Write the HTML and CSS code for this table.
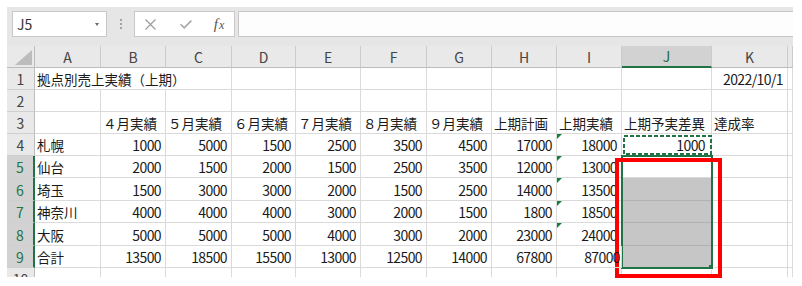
FILE: index.html
```html
<!DOCTYPE html>
<html lang="ja">
<head>
<meta charset="utf-8">
<title>Excel</title>
<link rel="stylesheet" href="styles.css">
</head>
<body>
<div class="frame">
  <div class="app">
    <div class="toolbar">
      <div class="namebox"><span>J5</span><span class="caret"></span></div>
      <div class="grip"><span></span><span></span><span></span></div>
      <div class="fbtns">
        <span class="fb fb1"><svg width="11" height="11" viewBox="0 0 11 11"><path d="M0.5 0.5 L10.5 10.5 M10.5 0.5 L0.5 10.5" stroke="#9a9a9a" stroke-width="1.1" fill="none"/></svg></span>
        <span class="fb fb2"><svg width="12" height="9" viewBox="0 0 12 9"><path d="M0.6 4.2 L4.2 7.8 L11.4 0.6" stroke="#a8a8a8" stroke-width="1.6" fill="none"/></svg></span>
        <span class="fb fb3"><i>f</i><i class="fx">x</i></span>
      </div>
      <div class="finput"></div>
    </div>
    <div class="sheetwrap">
      <div class="cells tmpl">
        <div class="c corner"><svg width="27" height="21" viewBox="0 0 27 21"><polygon points="25,4 25,19 8,19" fill="#bcbcbc"/></svg></div>
        <div class="c h">A</div><div class="c h">B</div><div class="c h">C</div><div class="c h">D</div><div class="c h">E</div><div class="c h">F</div><div class="c h">G</div><div class="c h">H</div><div class="c h">I</div><div class="c h sel">J</div><div class="c h">K</div><div class="c h"></div>

        <div class="c r">1</div><div class="c span3">拠点別売上実績（上期）</div><div class="c"></div><div class="c"></div><div class="c"></div><div class="c"></div><div class="c"></div><div class="c"></div><div class="c"></div><div class="c n">2022/10/1</div><div class="c"></div>

        <div class="c r">2</div><div class="c"></div><div class="c"></div><div class="c"></div><div class="c"></div><div class="c"></div><div class="c"></div><div class="c"></div><div class="c"></div><div class="c"></div><div class="c"></div><div class="c"></div><div class="c"></div>

        <div class="c r">3</div><div class="c"></div><div class="c">４月実績</div><div class="c">５月実績</div><div class="c">６月実績</div><div class="c">７月実績</div><div class="c">８月実績</div><div class="c">９月実績</div><div class="c">上期計画</div><div class="c">上期実績</div><div class="c">上期予実差異</div><div class="c">達成率</div><div class="c"></div>

        <div class="c r">4</div><div class="c">札幌</div><div class="c n">1000</div><div class="c n">5000</div><div class="c n">1500</div><div class="c n">2500</div><div class="c n">3500</div><div class="c n">4500</div><div class="c n">17000</div><div class="c n err">18000</div><div class="c n nj">1000</div><div class="c"></div><div class="c"></div>

        <div class="c r sel">5</div><div class="c">仙台</div><div class="c n">2000</div><div class="c n">1500</div><div class="c n">2000</div><div class="c n">1500</div><div class="c n">2500</div><div class="c n">3500</div><div class="c n">12000</div><div class="c n err">13000</div><div class="c"></div><div class="c"></div><div class="c"></div>

        <div class="c r sel">6</div><div class="c">埼玉</div><div class="c n">1500</div><div class="c n">3000</div><div class="c n">3000</div><div class="c n">2000</div><div class="c n">1500</div><div class="c n">2500</div><div class="c n">14000</div><div class="c n err">13500</div><div class="c g"></div><div class="c"></div><div class="c"></div>

        <div class="c r sel">7</div><div class="c">神奈川</div><div class="c n">4000</div><div class="c n">4000</div><div class="c n">4000</div><div class="c n">3000</div><div class="c n">2000</div><div class="c n">1500</div><div class="c n">1800</div><div class="c n err">18500</div><div class="c g"></div><div class="c"></div><div class="c"></div>

        <div class="c r sel">8</div><div class="c">大阪</div><div class="c n">5000</div><div class="c n">5000</div><div class="c n">5000</div><div class="c n">4000</div><div class="c n">3000</div><div class="c n">2000</div><div class="c n">23000</div><div class="c n err">24000</div><div class="c g"></div><div class="c"></div><div class="c"></div>

        <div class="c r sel">9</div><div class="c">合計</div><div class="c n">13500</div><div class="c n">18500</div><div class="c n">15500</div><div class="c n">13000</div><div class="c n">12500</div><div class="c n">14000</div><div class="c n">67800</div><div class="c n over">87000</div><div class="c g"></div><div class="c"></div><div class="c"></div>

        <div class="c r">10</div><div class="c"></div><div class="c"></div><div class="c"></div><div class="c"></div><div class="c"></div><div class="c"></div><div class="c"></div><div class="c"></div><div class="c"></div><div class="c"></div><div class="c"></div><div class="c"></div>
      </div>
      <div class="overlay tmpl">
        <div class="ants"><svg width="90" height="22" viewBox="0 0 90 22"><rect x="2" y="2" width="87" height="18" fill="none" stroke="#217346" stroke-width="2" stroke-dasharray="4 2"/></svg></div>
        <div class="selbox"></div>
      </div>
    </div>
  </div>
  <div class="redbox"></div>
</div>
</body>
</html>
```
FILE: styles.css
```css
html, body {
  margin: 0;
  background: #ffffff;
}
.frame {
  position: relative;
  width: 802px;
  height: 286px;
  box-sizing: border-box;
  padding: 7px 0 0 7px;
}
.app {
  width: 786px;
  height: 270px;
  overflow: hidden;
  background: #ffffff;
  font-family: "Noto Sans CJK JP", "Noto Sans", sans-serif;
}
.toolbar {
  height: 39px;
  box-sizing: border-box;
  background: #e6e6e6;
  display: flex;
  align-items: flex-start;
  padding: 4px 0 0 5px;
}
.namebox {
  width: 95px;
  height: 26px;
  box-sizing: border-box;
  background: #ffffff;
  border: 1px solid #c8c8c8;
  display: flex;
  align-items: center;
  justify-content: space-between;
  padding: 0 7px 0 4px;
  font-size: 14px;
  color: #333333;
}
.caret {
  width: 0;
  height: 0;
  border-left: 2.5px solid transparent;
  border-right: 2.5px solid transparent;
  border-top: 3px solid #6a6a6a;
}
.grip {
  width: 27px;
  display: flex;
  flex-direction: column;
  align-items: center;
  gap: 2px;
  padding-top: 8px;
}
.grip span {
  width: 2px;
  height: 2px;
  background: #a3a3a3;
}
.fbtns {
  width: 101px;
  height: 26px;
  box-sizing: border-box;
  background: #ffffff;
  border: 1px solid #c8c8c8;
  display: flex;
  align-items: center;
}
.fb {
  display: flex;
  justify-content: center;
  align-items: center;
}
.fb1 { width: 31px; }
.fb2 { width: 40px; }
.fb3 {
  width: 26px;
  font-family: "Liberation Serif", serif;
  font-size: 15px;
  color: #555555;
}
.fb3 .fx {
  font-size: 12px;
  margin-left: 1px;
  margin-top: 3px;
}
.finput {
  margin-left: 3px;
  flex: 1;
  height: 26px;
  box-sizing: border-box;
  background: #fdfdfd;
  border: 1px solid #c8c8c8;
  border-right: none;
}
.sheetwrap {
  display: grid;
}
.sheetwrap > .tmpl {
  grid-area: 1 / 1;
}
.tmpl {
  display: grid;
  grid-template-columns: 28px 66px 65px 66px 64px 65px 66px 65px 65px 65px 90px 76px 5px;
  grid-template-rows: 22px 22px 22px 22px 22px 22px 23px 22px 23px 22px 22px;
}
.cells {
  font-size: 13.5px;
  color: #1a1a1a;
}
.c {
  box-sizing: border-box;
  border-right: 1px solid #dadada;
  border-bottom: 1px solid #dadada;
  display: flex;
  align-items: center;
  padding: 1px 2px 0 2px;
  white-space: nowrap;
  min-width: 0;
}
.span3 {
  grid-column: span 3;
}
.n {
  justify-content: flex-end;
  padding-right: 4px;
  font-size: 14px;
  letter-spacing: -0.6px;
}
.nj {
  padding-right: 6px;
}
.h {
  background: #e9e9e9;
  border-right: 1px solid #cbcbcb;
  border-bottom: 1px solid #bdbdbd;
  justify-content: center;
  color: #444444;
  padding: 0;
  font-size: 14px;
}
.h.sel {
  background: #d2d2d2;
  color: #1e6b41;
  border-bottom: 2px solid #217346;
}
.corner {
  background: #e9e9e9;
  border-right: 1px solid #bdbdbd;
  border-bottom: 1px solid #bdbdbd;
  padding: 0;
  align-items: flex-start;
}
.r {
  background: #e9e9e9;
  border-right: 1px solid #bdbdbd;
  border-bottom: 1px solid #cfcfcf;
  justify-content: center;
  color: #444444;
  padding: 1px 0 0 0;
  font-size: 14px;
}
.r.sel {
  background: #d2d2d2;
  color: #217346;
  border-right: 2px solid #217346;
}
.g {
  background: #c6c6c6;
  border-bottom-color: #b2b2b2;
}
.err {
  position: relative;
}
.err::before {
  content: "";
  position: absolute;
  left: 0;
  top: 0;
  border-top: 5px solid #14803a;
  border-right: 5px solid transparent;
}
.over {
  position: relative;
  z-index: 3;
  padding-right: 1px;
}
.overlay {
  position: relative;
  z-index: 1;
  pointer-events: none;
}
.ants {
  grid-column: 11;
  grid-row: 5;
  display: flex;
}
.selbox {
  grid-column: 11;
  grid-row: 6 / 11;
  margin: -1px;
  border: 2px solid #217346;
  position: relative;
}
.selbox::after {
  content: "";
  position: absolute;
  right: -3px;
  bottom: -3px;
  width: 4px;
  height: 4px;
  background: #217346;
  border: 1px solid #ffffff;
  border-width: 0 1px 1px 0;
}
.redbox {
  position: absolute;
  left: 615px;
  top: 158px;
  width: 107px;
  height: 120px;
  box-sizing: border-box;
  border: 4px solid #ff0000;
  z-index: 2;
}
```
